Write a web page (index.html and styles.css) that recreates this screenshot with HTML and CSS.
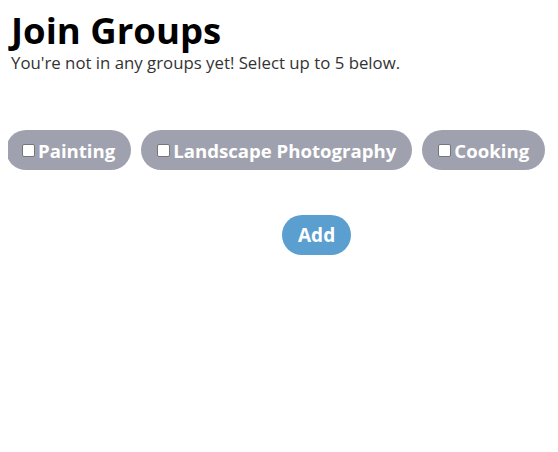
FILE: index.html
```html
<!DOCTYPE html>
<html>
<head>
<meta charset="utf-8">
<link rel="stylesheet" href="styles.css">
</head>
<body>
<h1 class="title">Join Groups</h1>
<p class="subtitle">You're not in any groups yet! Select up to 5 below.</p>
<div class="groups">
  <label class="pill"><input type="checkbox" class="check">Painting</label>
  <label class="pill"><input type="checkbox" class="check">Landscape Photography</label>
  <label class="pill"><input type="checkbox" class="check">Cooking</label>
</div>
<div class="actions">
  <button class="add">Add</button>
</div>
</body>
</html>
```
FILE: styles.css
```css
body {
  margin: 8px;
  font-family: "Open Sans", "Lato", sans-serif;
  background: #fff;
}
.title {
  margin: 0;
  padding-left: 3px;
  font-size: 36.5px;
  font-weight: 700;
  line-height: 44px;
  color: #000;
}
.subtitle {
  margin: 0;
  padding-left: 3px;
  font-size: 16.8px;
  line-height: 22px;
  color: #333;
}
.groups {
  display: flex;
  gap: 10px;
  margin: 56px 0 0 -2px;
}
.pill {
  display: flex;
  flex-shrink: 0;
  align-items: center;
  height: 40px;
  padding: 0 16px;
  border-radius: 20px;
  background: #9fa2ae;
  color: #fff;
  font-size: 18.6px;
  font-weight: 700;
  white-space: nowrap;
  box-sizing: border-box;
}
.check {
  appearance: none;
  width: 13px;
  height: 13px;
  margin: 0 3px 0 0;
  background: #fff;
  border: 1px solid #767676;
  border-radius: 2px;
  box-sizing: border-box;
}
.actions {
  margin-top: 45px;
  padding-left: 274px;
}
.add {
  height: 40px;
  padding: 0 16px;
  border: none;
  border-radius: 20px;
  background: #5a9fd0;
  color: #fff;
  font-family: inherit;
  font-size: 19px;
  font-weight: 700;
}
```
